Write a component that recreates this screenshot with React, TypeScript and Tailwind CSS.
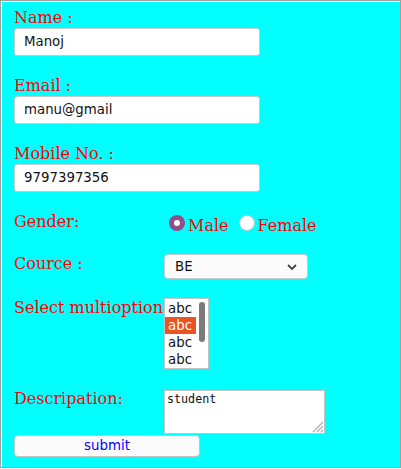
const serif = "font-['DejaVu_Serif',serif] text-[16px] leading-[19px] text-[#ff0000]"
const sans = "font-['DejaVu_Sans',sans-serif] text-[13.33px]"

function TextInput({ value }: { value: string }) {
  return (
    <div
      className={`mt-[1px] flex h-[28px] w-[246px] items-center rounded-[3px] border border-[#c8c8c8] bg-white pl-[9px] text-[#111] ${sans}`}
    >
      {value}
    </div>
  )
}

function Radio({ checked }: { checked?: boolean }) {
  return checked ? (
    <span className="mt-[-1px] flex h-[16px] w-[16px] items-center justify-center rounded-full bg-[#924d8b]">
      <span className="h-[6px] w-[6px] rounded-full bg-white" />
    </span>
  ) : (
    <span className="mt-[-1px] block h-[16px] w-[16px] rounded-full border border-[#c4c4c4] bg-white" />
  )
}

export default function App() {
  const options = ['abc', 'abc', 'abc', 'abc']

  return (
    <div className="h-[468px] w-[401px] border border-[#a0a0a0] bg-[#00ffff]">
      <div className="flex h-full flex-col border-l border-t border-white pl-[12px] pt-[6px]">
        <div className={serif}>Name :</div>
        <TextInput value="Manoj" />

        <div className={`mt-[20px] ${serif}`}>Email :</div>
        <TextInput value="manu@gmail" />

        <div className={`mt-[20px] ${serif}`}>Mobile No. :</div>
        <TextInput value="9797397356" />

        {/* gender */}
        <div className="mt-[20px] flex">
          <div className={`w-[150px] ${serif}`}>Gender:</div>
          <div className={`mt-[4px] flex items-start ${serif}`}>
            <span className="ml-[5px] mr-[3px]">
              <Radio checked />
            </span>
            <span>Male</span>
            <span className="ml-[10px] mr-[3px]">
              <Radio />
            </span>
            <span>Female</span>
          </div>
        </div>

        {/* course */}
        <div className="mt-[19px] flex">
          <div className={`w-[150px] ${serif}`}>Cource :</div>
          <div
            className={`flex h-[25px] w-[144px] items-center justify-between rounded-[4px] border border-[#c8c8c8] bg-[#fbfbfb] pl-[10px] pr-[10px] text-[#111] ${sans}`}
          >
            <span>BE</span>
            <svg width="10" height="6" viewBox="0 0 10 6">
              <path d="M1 1l4 4 4-4" fill="none" stroke="#444" strokeWidth="1.8" />
            </svg>
          </div>
        </div>

        {/* multi select */}
        <div className="mt-[19px] flex">
          <div className={`w-[150px] whitespace-nowrap ${serif}`}>Select multioption</div>
          <div className="relative h-[71px] w-[45px] border border-[#c4c4c4] bg-white pt-[1px]">
            {options.map((o, i) => (
              <div
                key={i}
                className={`h-[17px] w-[31px] pl-[3px] leading-[17px] ${sans} ${
                  i === 1 ? 'bg-[#e95420] text-white' : 'text-[#111]'
                }`}
              >
                {o}
              </div>
            ))}
            <div className="absolute left-[34px] top-[3px] h-[40px] w-[6px] rounded-full bg-[#7b7b7b]" />
          </div>
        </div>

        {/* description */}
        <div className="mt-[21px] flex">
          <div className={`-mt-[1px] w-[150px] ${serif}`}>Descripation:</div>
          <div className="relative h-[44px] w-[161px] border border-[#c4c4c4] bg-white px-[2px] pt-[1px] font-['DejaVu_Sans_Mono',monospace] text-[11.7px] leading-[15px] text-[#111]">
            student
            <svg className="absolute bottom-0 right-0" width="14" height="14" viewBox="0 0 14 14">
              <path d="M13 3L3 13M13 7L7 13M13 11L11 13" stroke="#aaa" strokeWidth="1.2" />
            </svg>
          </div>
        </div>

        <button
          className={`mt-[1px] h-[22px] w-[186px] rounded-[4px] border border-[#c4c4c4] bg-[#fbfbfb] text-[#0000ff] ${sans}`}
        >
          submit
        </button>
      </div>
    </div>
  )
}
